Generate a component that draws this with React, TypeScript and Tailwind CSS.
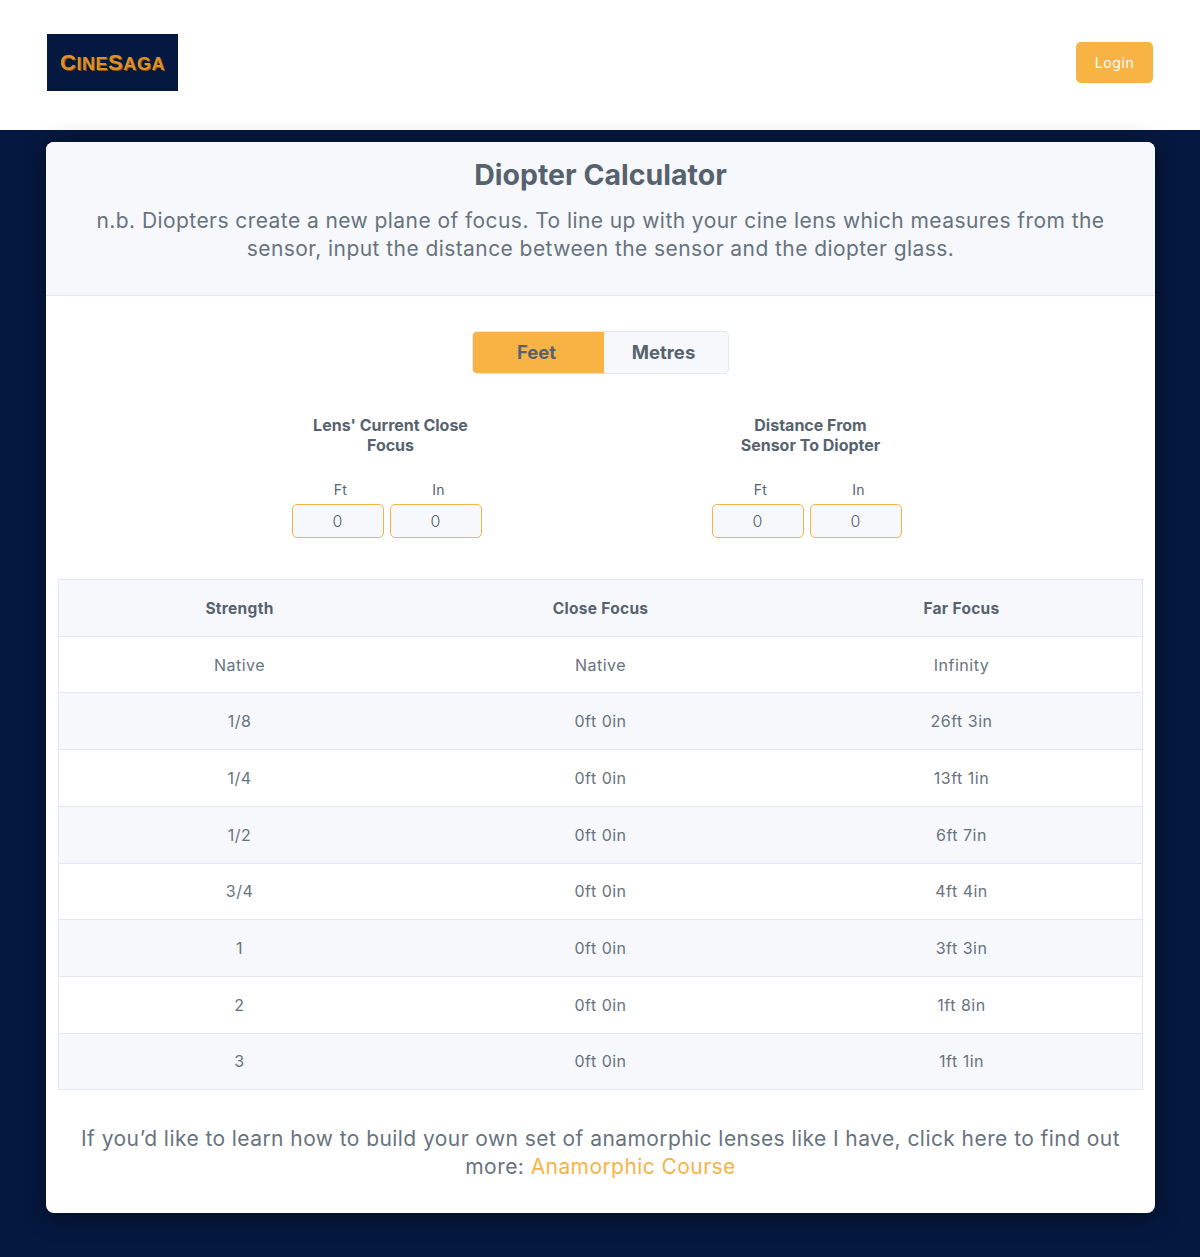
const body = { fontFamily: "Inter, 'Noto Sans', sans-serif" };
const head = { fontFamily: "Inter, 'Open Sans', sans-serif" };

const rows = [
  ["Native", "Native", "Infinity"],
  ["1/8", "0ft 0in", "26ft 3in"],
  ["1/4", "0ft 0in", "13ft 1in"],
  ["1/2", "0ft 0in", "6ft 7in"],
  ["3/4", "0ft 0in", "4ft 4in"],
  ["1", "0ft 0in", "3ft 3in"],
  ["2", "0ft 0in", "1ft 8in"],
  ["3", "0ft 0in", "1ft 1in"],
];

function FeetInches({ title }: { title: React.ReactNode }) {
  return (
    <div className="flex w-[190px] flex-col items-center">
      <div className="h-[44px] w-[190px] pt-[1px] text-center text-[16px] font-bold leading-[20px] text-[#56636f]" style={head}>
        {title}
      </div>
      <div className="mr-[8px] mt-[22px] flex gap-[6px]">
        {["Ft", "In"].map((unit) => (
          <div key={unit} className="flex w-[92px] flex-col items-center">
            <label className="pl-[6px] text-[14px] leading-[20px] tracking-[0.3px] text-[#56636f]" style={body}>{unit}</label>
            <input
              readOnly
              value="0"
              className="mt-[4px] h-[34px] w-[92px] rounded-[5px] border border-[#f8b345] bg-[#f6f8fc] text-center text-[16px] font-light text-[#56636f] outline-none"
              style={body}
            />
          </div>
        ))}
      </div>
    </div>
  );
}

export default function App() {
  return (
    <div className="min-h-[1257px] bg-[#05183f]" style={body}>
      <header className="flex h-[130px] items-center justify-between bg-white px-[47px] pb-[5px]">
        <div className="flex h-[57.5px] w-[131px] items-center justify-center bg-[#05183f]">
          <span
            className="text-[22px] font-bold leading-none tracking-[0.55px] text-[#dc9228]"
            style={{ fontFamily: "'Liberation Sans', sans-serif", textShadow: "1px 1px 0 #8a4d14" }}
          >
            C<span className="text-[18px]">INE</span>S<span className="text-[18px]">AGA</span>
          </span>
        </div>
        <button className="h-[41.5px] w-[77px] rounded-[5px] bg-[#f8b345] text-[14px] tracking-[0.6px] text-white">Login</button>
      </header>

      <main className="mx-[46px] mt-[12px] w-[1109px] overflow-hidden rounded-[8px] bg-white shadow-[0_4px_24px_rgba(0,0,0,0.45)]">
        <div className="h-[154px] border-b border-[#e2e7f0] bg-[#f6f8fc] px-[40px] pt-[16px] text-center">
          <h1 className="text-[28.5px] font-bold leading-[34px] text-[#56636f]" style={head}>Diopter Calculator</h1>
          <p className="mt-[15px] text-[21px] leading-[28px] tracking-[0.43px] text-[#67737e]">
            n.b. Diopters create a new plane of focus. To line up with your cine lens which measures from the
            <br />
            sensor, input the distance between the sensor and the diopter glass.
          </p>
        </div>

        <div className="flex justify-center pt-[35px]">
          <div className="flex h-[43px] w-[257px] overflow-hidden rounded-[5px] border border-[#e2e7f0] bg-[#f6f8fc] text-[18.5px] font-bold text-[#56636f]" style={head}>
            <div className="flex w-[131px] items-center justify-center bg-[#f8b345] pr-[4px]">Feet</div>
            <div className="flex flex-1 items-center justify-center pr-[5px]">Metres</div>
          </div>
        </div>

        <div className="mt-[40px] flex justify-center gap-[230px]">
          <FeetInches title={<>Lens' Current Close<br />Focus</>} />
          <FeetInches title={<>Distance From<br />Sensor To Diopter</>} />
        </div>

        <div className="mx-[12px] mt-[41px] border border-[#e2e7f0]">
          <div className="grid h-[55.75px] grid-cols-3 items-center bg-[#f6f8fc] pt-[1px] text-center text-[15.5px] font-bold tracking-[0.3px] text-[#56636f]" style={head}>
            <div>Strength</div>
            <div>Close Focus</div>
            <div>Far Focus</div>
          </div>
          {rows.map((row, i) => (
            <div
              key={row[0]}
              className={`grid h-[56.7px] grid-cols-3 items-center border-t border-[#e2e7f0] text-center text-[16px] tracking-[0.5px] text-[#67737e] ${i % 2 ? "bg-[#f6f8fc]" : "bg-white"}`}
            >
              {row.map((cell, j) => (
                <div key={j}>{cell}</div>
              ))}
            </div>
          ))}
        </div>

        <p className="mt-[35px] h-[88px] text-center text-[21px] leading-[28px] tracking-[0.43px] text-[#67737e]">
          If you’d like to learn how to build your own set of anamorphic lenses like I have, click here to find out
          <br />
          more: <a className="text-[#f8b345]">Anamorphic Course</a>
        </p>
      </main>
    </div>
  );
}
